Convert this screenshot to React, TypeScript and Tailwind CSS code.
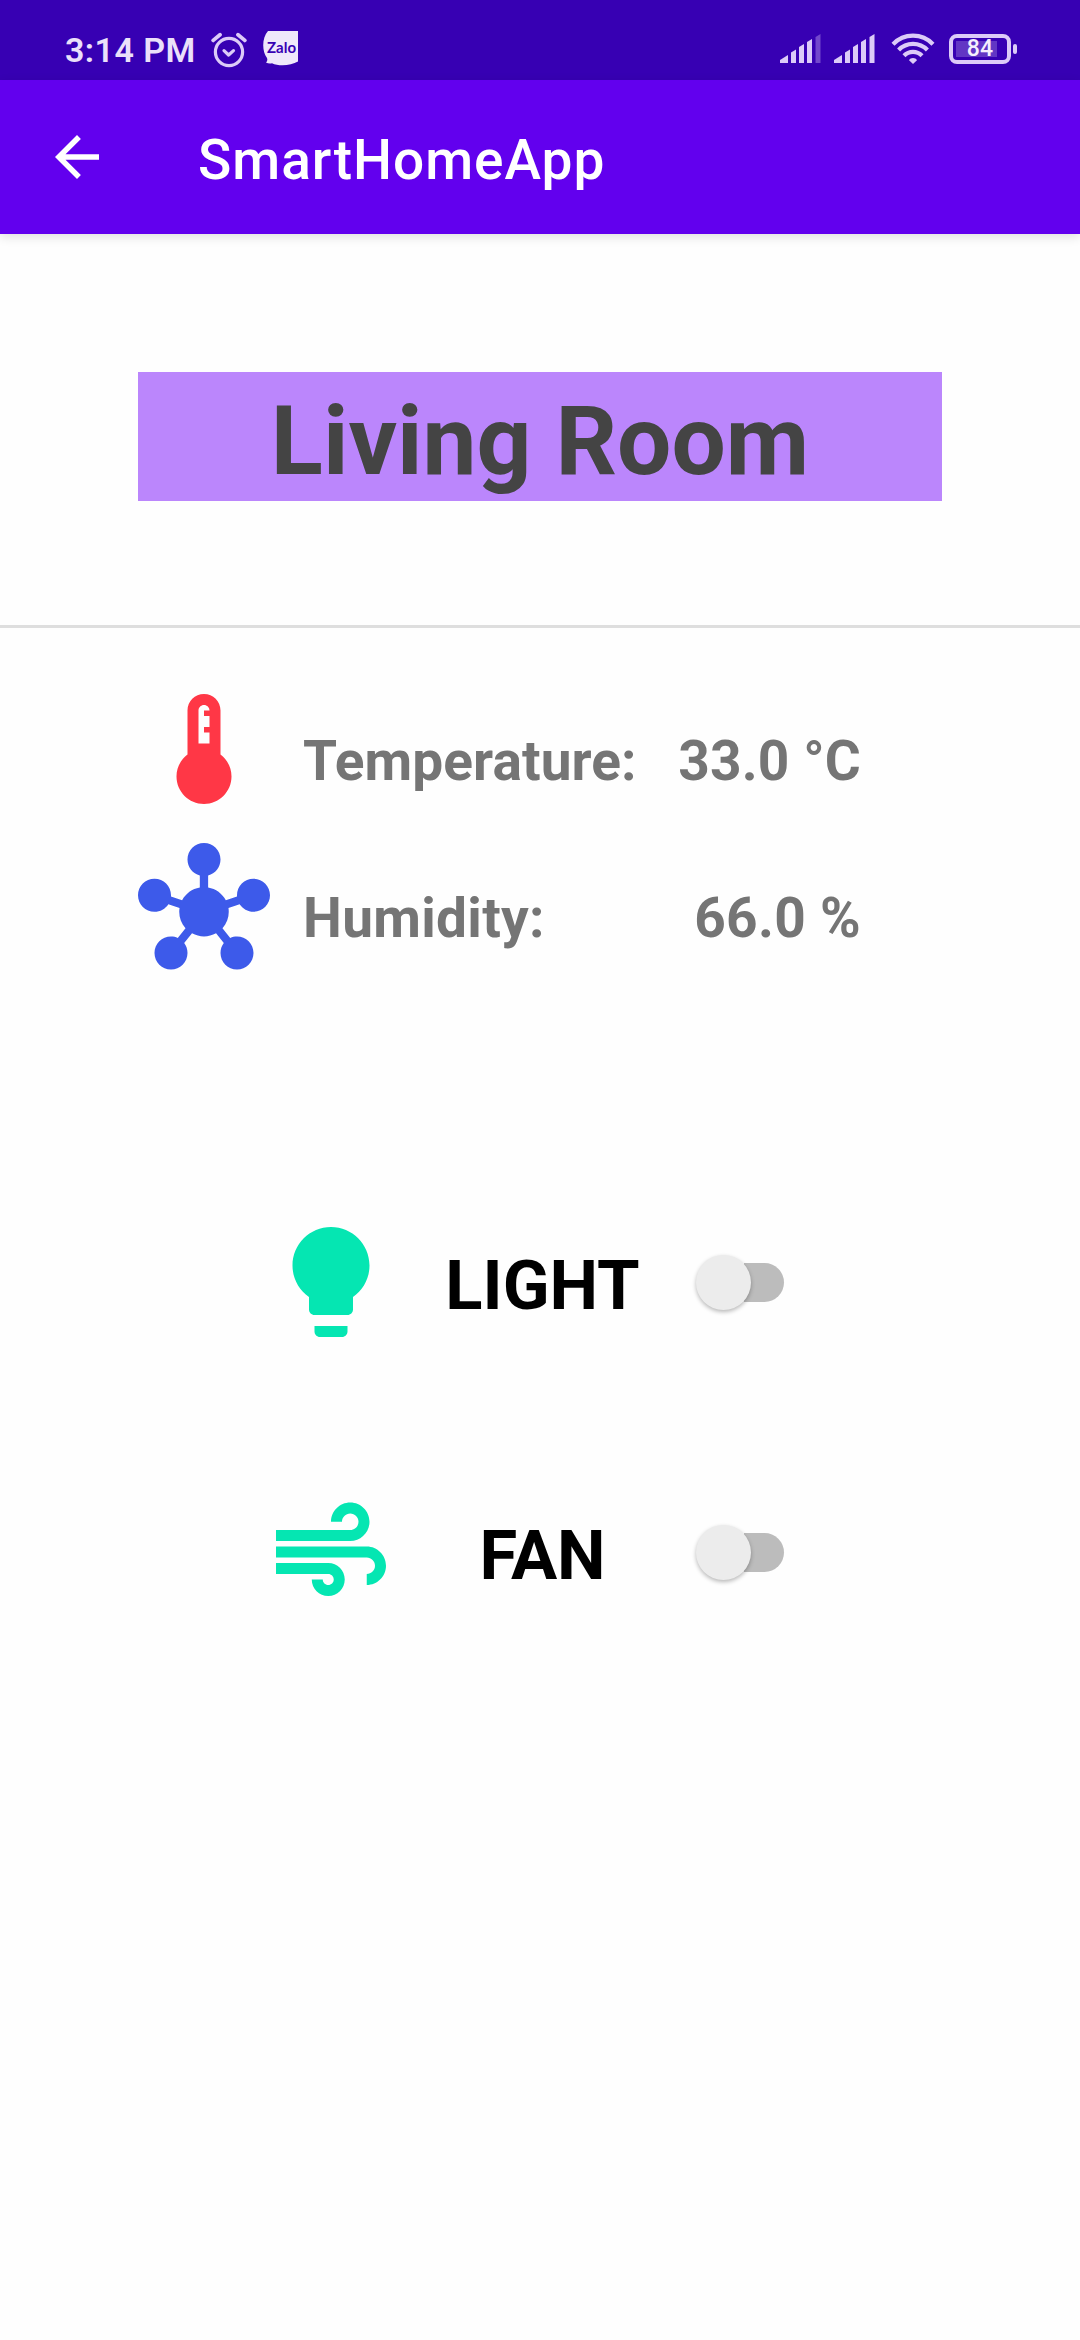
import { useState, type ReactNode } from "react";

function StatusBar() {
  return (
    <div className="flex h-20 items-start justify-between bg-[#3700b3] pr-[63px] pl-[65px] text-[#ebe0fa]">
      <div className="flex items-start">
        <span className="mt-[30px] w-[142px] text-[34px] leading-[40px] font-semibold tracking-[0.45px] whitespace-nowrap">3:14 PM</span>
        <svg className="mt-[32px] ml-[3px] h-[36px] w-[37px]" viewBox="0 0 37 36" fill="none" stroke="#dccbf8" strokeWidth="3.2" strokeLinecap="round" strokeLinejoin="round">
          <circle cx="19" cy="20" r="13.6" />
          <path d="M14 18.6l4.6 4.4 4.9-4.4" />
          <path d="M3.2 8.4L10 2.8M28 2.8l6.8 5.6" strokeWidth="3.8" />
        </svg>
        <div className="relative mt-[31px] ml-[16px] h-[35px] w-[35px]">
          <svg className="absolute inset-0 h-full w-full" viewBox="0 0 35 35">
            <path d="M5 0H35V30.5C28 34.6 16 35.6 9 32.2Q6 33 3 31.6Q5 30 4 27C-1.2 20-1.2 7 5 0Z" fill="#efe8fb" />
          </svg>
          <span className="absolute top-[7px] left-[4px] font-[Lato,sans-serif] text-[15px] leading-[18px] font-bold text-[#3700b3]">Zalo</span>
        </div>
      </div>
      <div className="flex items-start">
        <SignalBars dimLast />
        <SignalBars />
        <svg className="mt-[33px] ml-[3px] h-[32px] w-[44px]" viewBox="0 0 44 32" fill="none" stroke="#dccbf8" strokeWidth="4.2">
          <path d="M2 11.2C13-.2 31-.2 42 11.2" />
          <path d="M7.6 17C15.5 8.8 28.5 8.8 36.4 17" />
          <path d="M13 22.8C18 17.6 26 17.6 31 22.8" />
          <path d="M22 31l-4-3.8c1.3-3 6.7-3 8 0z" fill="#dccbf8" stroke="none" />
        </svg>
        <div className="mt-[34px] ml-[14px] flex items-center">
          <div className="flex h-[30px] w-[62px] items-center rounded-[8px] border-4 border-[#dccbf8] px-[3px]">
            <div className="flex h-[16px] w-[41px] items-center justify-end bg-[#6236c4] pr-[4px] text-[23px] leading-[16px] font-medium text-[#f5effd]">84</div>
          </div>
          <div className="ml-[2px] h-[10px] w-[4px] rounded-[2px] bg-[#dccbf8]" />
        </div>
      </div>
    </div>
  );
}

function SignalBars({ dimLast = false }: { dimLast?: boolean }) {
  return (
    <svg className="mt-[33px] mr-[13px] h-[31px] w-[41px]" viewBox="0 0 41 31" fill="#dccbf8">
      <path d="M0 30v-3l8-5v8z" />
      <path d="M11 30V19.6l5-3V30z" />
      <path d="M19 30V14l5-3v19z" />
      <path d="M27 30V9l5-3v24z" />
      <path d="M35.500 30V4l5-3v29z" fill={dimLast ? "#7347cc" : "#dccbf8"} />
    </svg>
  );
}

function Icon({ path, color }: { path: string; color: string }) {
  return (
    <svg className="h-[132px] w-[132px] shrink-0" viewBox="0 0 24 24" fill={color}>
      <path d={path} />
    </svg>
  );
}

const THERMOSTAT =
  "M15 13V5c0-1.66-1.34-3-3-3S9 3.34 9 5v8c-1.21.91-2 2.37-2 4 0 2.76 2.24 5 5 5s5-2.24 5-5c0-1.63-.79-3.09-2-4zm-4-8c0-.55.45-1 1-1s1 .45 1 1h-1v1h1v2h-1v1h1v2h-2V5z";
const HUB =
  "M8.4 18.2C8.78 18.7 9 19.32 9 20c0 1.66-1.34 3-3 3s-3-1.34-3-3 1.34-3 3-3c.44 0 .85.09 1.23.26l1.41-1.77c-.92-1.03-1.29-2.39-1.09-3.69l-2.03-.68C4.98 11.95 4.06 12.5 3 12.5c-1.66 0-3-1.34-3-3s1.34-3 3-3 3 1.34 3 3c0 .07 0 .14-.01.21l2.03.68c.64-1.21 1.82-2.09 3.22-2.32V5.91C9.96 5.57 9 4.4 9 3c0-1.66 1.34-3 3-3s3 1.34 3 3c0 1.4-.96 2.57-2.25 2.91v2.16c1.4.23 2.58 1.11 3.22 2.32l2.03-.68C18 9.64 18 9.57 18 9.5c0-1.66 1.34-3 3-3s3 1.34 3 3-1.34 3-3 3c-1.06 0-1.98-.55-2.52-1.37l-2.03.68c.2 1.29-.16 2.65-1.09 3.69l1.41 1.77C17.15 17.09 17.56 17 18 17c1.66 0 3 1.34 3 3s-1.34 3-3 3-3-1.34-3-3c0-.68.22-1.3.6-1.8l-1.41-1.77c-1.35.75-3.01.76-4.37 0L8.4 18.2z";
const BULB =
  "M9 21c0 .55.45 1 1 1h4c.55 0 1-.45 1-1v-1H9v1zm3-19C8.14 2 5 5.14 5 9c0 2.38 1.19 4.47 3 5.74V17c0 .55.45 1 1 1h6c.55 0 1-.45 1-1v-2.26c1.81-1.27 3-3.36 3-5.74 0-3.86-3.14-7-7-7z";
const AIR =
  "M14.5 17c0 1.65-1.35 3-3 3s-3-1.35-3-3h2c0 .55.45 1 1 1s1-.45 1-1-.45-1-1-1H2v-2h9.5c1.65 0 3 1.35 3 3zM19 6.5C19 4.57 17.43 3 15.5 3S12 4.57 12 6.500h2c0-.83.67-1.5 1.5-1.5s1.5.67 1.5 1.5S16.33 8 15.5 8H2v2h13.5c1.93 0 3.5-1.57 3.5-3.5zM18.5 11H2v2h16.5c.83 0 1.5.67 1.5 1.5s-.67 1.5-1.5 1.5v2c1.93 0 3.5-1.57 3.5-3.5S20.43 11 18.5 11z";

function Reading({ icon, children }: { icon: ReactNode; children: ReactNode }) {
  return (
    <div className="flex h-[132px] items-center text-[55px] leading-[64px] font-bold text-[#757575]">
      {icon}
      {children}
    </div>
  );
}

function Toggle({ label }: { label: string }) {
  const [on, setOn] = useState(false);
  return (
    <button
      type="button"
      role="switch"
      aria-label={label}
      aria-checked={on}
      onClick={() => setOn(!on)}
      className={on ? "flex h-[56px] w-[88px] rotate-180 items-center" : "flex h-[56px] w-[88px] items-center"}
    >
      <span className="z-10 h-[55px] w-[55px] shrink-0 rounded-full bg-[#ececec] shadow-[0_2px_4px_rgba(0,0,0,0.28)]" />
      <span className="-ml-[7px] h-[39px] w-[40px] shrink-0 rounded-r-full bg-[#bcbcbc]" />
    </button>
  );
}

function Device({ icon, label }: { icon: ReactNode; label: string }) {
  return (
    <div className="flex h-[132px] items-center">
      {icon}
      <span className="mt-[8px] w-[291px] text-center text-[68.75px] leading-[80px] font-bold text-black">{label}</span>
      <div className="ml-[8px]">
        <Toggle label={label} />
      </div>
    </div>
  );
}

export default function App() {
  return (
    <div className="flex h-[2340px] w-[1080px] flex-col overflow-hidden bg-[#fefefe] font-[Roboto,sans-serif]">
      <StatusBar />
      <header className="z-10 flex h-[154px] shrink-0 items-start bg-[#6200ee] pl-[44px] text-white shadow-[0_3px_10px_rgba(0,0,0,0.12)]">
        <svg className="mt-[44px] h-[66px] w-[66px]" viewBox="0 0 24 24" fill="currentColor">
          <path d="M20 11H7.83l5.59-5.59L12 4l-8 8 8 8 1.410-1.410L7.830 13H20v-2z" />
        </svg>
        <h1 className="mt-[48px] ml-[88px] text-[55px] leading-[64px] font-medium tracking-[1px]">SmartHomeApp</h1>
      </header>
      <div className="h-[391px] shrink-0 px-[138px] pt-[138px]">
        <h2 className="h-[129px] bg-[#bb86fc] pt-[9px] text-center text-[96.25px] leading-[120px] font-bold text-[#444444]">Living Room</h2>
      </div>
      <div className="h-[3px] shrink-0 bg-[#dedede]" />
      <section className="mt-[55px] ml-[138px] flex w-[723px] flex-col gap-[28px]">
        <Reading icon={<Icon path={THERMOSTAT} color="#ff3746" />}>
          <span className="mt-[24px] ml-[33px] flex-1 tracking-[0.1px] whitespace-nowrap">Temperature:</span>
          <span className="mt-[24px] tracking-[0.15px] whitespace-nowrap">33.0 °C</span>
        </Reading>
        <Reading icon={<Icon path={HUB} color="#3d5aea" />}>
          <span className="mt-[18px] ml-[33px] flex-1 tracking-[0.3px] whitespace-nowrap">Humidity:</span>
          <span className="mt-[18px] tracking-[0.3px] whitespace-nowrap">66.0 %</span>
        </Reading>
      </section>
      <section className="mt-[241px] ml-[265px] flex flex-col gap-[138px]">
        <Device icon={<Icon path={BULB} color="#05e6b2" />} label="LIGHT" />
        <Device icon={<Icon path={AIR} color="#05e6b2" />} label="FAN" />
      </section>
    </div>
  );
}
